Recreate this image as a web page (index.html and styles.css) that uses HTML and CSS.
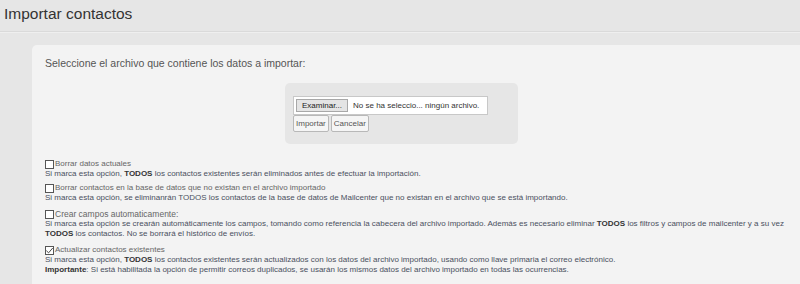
FILE: index.html
```html
<!DOCTYPE html>
<html>
<head>
<meta charset="utf-8">
<link rel="stylesheet" href="styles.css">
</head>
<body>
<div class="header"><h1 class="title">Importar contactos</h1></div>
<div class="panel">
  <p class="lead">Seleccione el archivo que contiene los datos a importar:</p>
  <div class="upload-row">
    <div class="upload">
      <div class="file"><span class="file-btn">Examinar...</span><span class="file-name">No se ha seleccio... ningún archivo.</span></div>
      <div class="actions"><span class="btn">Importar</span><span class="btn">Cancelar</span></div>
    </div>
  </div>
  <div class="options">
    <div class="opt first">
      <div class="opt-label"><span class="cb"></span>Borrar datos actuales</div>
      <div class="opt-desc">Si marca esta opción, <b>TODOS</b> los contactos existentes serán eliminados antes de efectuar la importación.</div>
    </div>
    <div class="opt">
      <div class="opt-label"><span class="cb"></span>Borrar contactos en la base de datos que no existan en el archivo importado</div>
      <div class="opt-desc">Si marca esta opción, se eliminanrán TODOS los contactos de la base de datos de Mailcenter que no existan en el archivo que se está importando.</div>
    </div>
    <div class="opt">
      <div class="opt-label big"><span class="cb"></span>Crear campos automaticamente:</div>
      <div class="opt-desc">Si marca esta opción se crearán automáticamente los campos, tomando como referencia la cabecera del archivo importado. Además es necesario eliminar <b>TODOS</b> los filtros y campos de mailcenter y a su vez<br><b>TODOS</b> los contactos. No se borrará el histórico de envíos.</div>
    </div>
    <div class="opt last">
      <div class="opt-label"><span class="cb checked"><svg viewBox="0 0 10 10" width="10" height="10"><path d="M1.5 5.2 L4 7.6 L8.6 2.2" fill="none" stroke="#444" stroke-width="1.1"/></svg></span>Actualizar contactos existentes</div>
      <div class="opt-desc tight">Si marca esta opción, <b>TODOS</b> los contactos existentes serán actualizados con los datos del archivo importado, usando como llave primaria el correo electrónico.<br><b>Importante</b>: Si está habilitada la opción de permitir correos duplicados, se usarán los mismos datos del archivo importado en todas las ocurrencias.</div>
    </div>
  </div>
</div>
</body>
</html>
```
FILE: styles.css
```css
html, body {
  margin: 0;
  padding: 0;
}
body {
  background: #e6e6e6;
  font-family: "Liberation Sans", Arial, sans-serif;
  color: #555;
  overflow: hidden;
  height: 284px;
}
.header {
  border-bottom: 1px solid #dadada;
  height: 32px;
  box-sizing: border-box;
  box-shadow: 0 1px 0 #efefef;
}
.title {
  margin: 0;
  padding: 4px 0 0 4px;
  font-size: 15.5px;
  font-weight: normal;
  color: #333;
  line-height: 20px;
}
.panel {
  margin: 13px 0 0 32px;
  background: #f3f3f3;
  border-radius: 5px 0 0 0;
  padding: 10px 0 0 13px;
  height: 239px;
  box-sizing: border-box;
}
.lead {
  margin: 0;
  font-size: 10.5px;
  line-height: 16px;
  color: #555;
}
.upload-row {
  display: flex;
  justify-content: flex-start;
  padding-left: 240px;
  margin-top: 12px;
}
.upload {
  background: #e6e6e6;
  border-radius: 5px;
  width: 233px;
  height: 61px;
  padding: 13px 0 0 8px;
  box-sizing: border-box;
}
.file {
  display: flex;
  align-items: center;
  background: #fff;
  border: 1px solid #c8c8c8;
  width: 195px;
  height: 19px;
  box-sizing: border-box;
  font-size: 8px;
  color: #333;
}
.file-btn {
  margin-left: 2px;
  background: #e4e4e4;
  border: 1px solid #a8a8a8;
  height: 13px;
  line-height: 12px;
  padding: 0 5px;
  box-sizing: border-box;
  color: #222;
}
.file-name {
  margin-left: 5px;
}
.actions {
  display: flex;
  gap: 2px;
}
.btn {
  font-size: 8px;
  color: #555;
  background: #f5f5f5;
  border: 1px solid #b8b8b8;
  border-radius: 2px;
  height: 17px;
  line-height: 15px;
  padding: 0 2px;
  box-sizing: border-box;
}
.options {
  margin-top: 15px;
}
.opt {
  margin-bottom: 6px;
  font-size: 8px;
  line-height: 10px;
}
.opt.first {
  margin-bottom: 4px;
}
.opt.last {
  margin-bottom: 0;
}
.opt-label {
  color: #666;
  display: flex;
  align-items: center;
}
.opt-label.big {
  font-size: 8.5px;
}
.opt-desc {
  color: #4a5060;
}
.opt-desc.tight {
  line-height: 9.5px;
}
.opt-desc b {
  color: #333;
}
.cb {
  display: inline-block;
  width: 9px;
  height: 9px;
  border: 1px solid #555;
  background: #fff;
  box-sizing: border-box;
  margin-right: 1px;
  position: relative;
}
.cb svg {
  position: absolute;
  left: -1px;
  top: -1px;
  width: 9px;
  height: 9px;
}
```
